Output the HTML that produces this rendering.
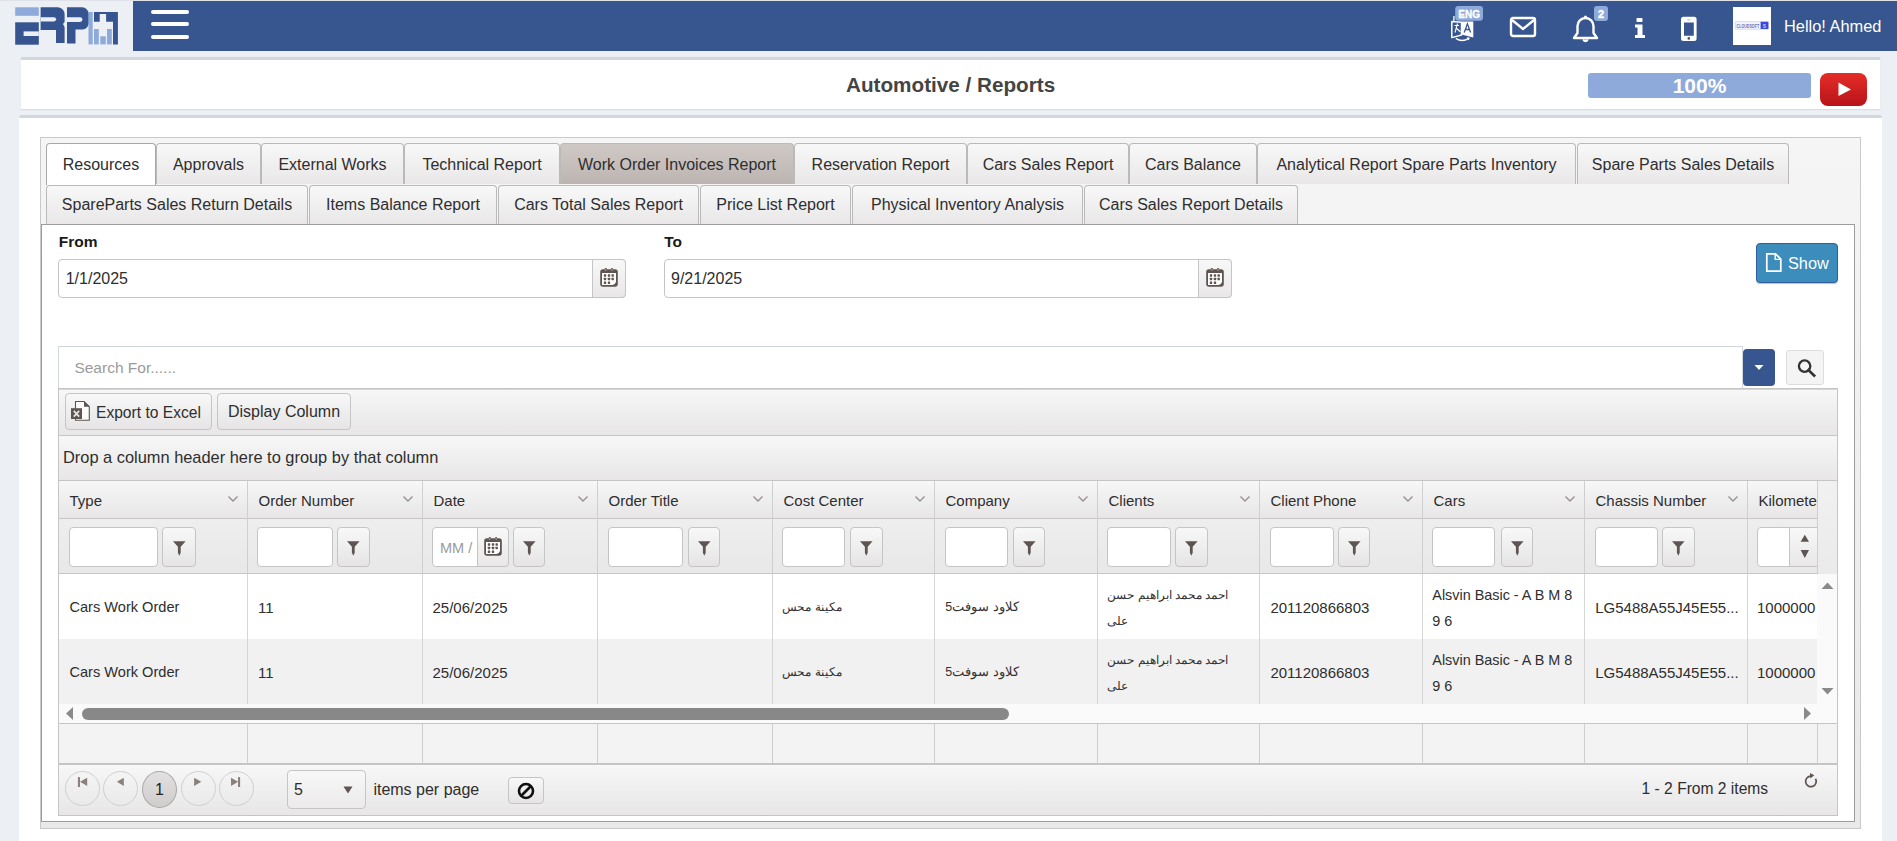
<!DOCTYPE html>
<html>
<head>
<meta charset="utf-8">
<style>
*{box-sizing:border-box;margin:0;padding:0}
html,body{width:1897px;height:841px;overflow:hidden}
body{position:relative;background:#ecf0f5;font-family:"Liberation Sans",sans-serif;color:#2e2e2e}
.a{position:absolute}
.t{position:absolute;white-space:nowrap;line-height:1}
#topline{left:0;top:0;width:1897px;height:1px;background:#dfe2e8}
#nav{left:133px;top:1px;width:1764px;height:50px;background:#37558f}
.bar{position:absolute;left:151px;width:38px;height:4px;border-radius:2px;background:#fff}
#titlecard{left:21px;top:57px;width:1859px;height:52px;background:#fff;border-top:3px solid #d2d6de;box-shadow:0 1px 1px rgba(0,0,0,.08)}
#maincard{left:19px;top:115px;width:1863px;height:760px;background:#fff;border-top:3px solid #d2d6de;border-radius:3px}
#tabwrap{left:40px;top:137px;width:1821px;height:692px;border:1px solid #c9c9c9;background:linear-gradient(#f5f5f5,#e9e9e9)}
#content{left:41px;top:224px;width:1814px;height:598px;border:1px solid #9c9c9c;background:#fff}
.tab{position:absolute;height:41px;border:1px solid #bababa;border-bottom:0;border-radius:4px 4px 0 0;background:linear-gradient(#f8f8f8,#e9e7e7);font-size:16px;color:#2e2e2e;text-align:center;line-height:41px;white-space:nowrap}
.tab.r2{height:39px;line-height:38px}
.tab.act{background:#fff;border-color:#a8a8a8;height:42px;line-height:41px}
.tab.hov{background:linear-gradient(#cfc9c6,#bcb4b0)}
.inp{position:absolute;border:1px solid #c5c5c5;border-radius:4px;background:#fff}
.addon{position:absolute;border:1px solid #c5c5c5;border-radius:0 4px 4px 0;background:linear-gradient(#f8f8f8,#e9e7e7)}
.btn{position:absolute;border:1px solid #c5c5c5;border-radius:4px;background:linear-gradient(#f8f8f8,#e6e4e4)}
.grad{background:linear-gradient(#f7f7f7,#e8e6e6)}
.vs{position:absolute;width:1px;background:#cfcfcf}
.hs{position:absolute;height:1px;background:#c5c5c5}
.circ{position:absolute;width:34px;height:34px;border:1px solid #d0d0d0;border-radius:50%;background:transparent}
</style>
</head>
<body>
<div id="topline" class="a"></div>
<div id="nav" class="a"></div>
<div class="bar" style="top:10px"></div>
<div class="bar" style="top:22px"></div>
<div class="bar" style="top:35px"></div>
<svg class="a" style="left:0;top:0" width="133" height="50" viewBox="0 0 133 50">
<g fill="#36548f">
<rect x="15.2" y="22.3" width="23.6" height="22.4"/>
<path d="M40.6 7.3 H58 A7 7 0 0 1 64.6 14.5 V22 L63 24 L64.6 27 V42.9 H56 V29.9 H40.6 Z"/>
<path d="M67 7.3 H82 A7 7 0 0 1 88.8 14.5 V23 A6.5 6.5 0 0 1 82.5 29.5 H75.5 V43.5 H67 Z"/>
<path d="M94 12 H117.9 V44.4 H113 V21.7 H106.1 V14.1 H99.7 V21.7 H94 Z"/>
</g>
<g fill="#ecf0f5">
<rect x="23.6" y="31.4" width="15.2" height="4.6"/>
<path d="M40.6 17.2 H54 A2.1 2.1 0 0 1 54 21.4 H40.6 Z"/>
<path d="M67 17.2 H80 A2.4 2.4 0 0 1 80 22 H67 Z"/>
</g>
<g fill="#8eaadb">
<rect x="15.2" y="7.3" width="23.6" height="8.5"/>
<rect x="88.5" y="12" width="4.2" height="32.4"/>
<rect x="94" y="29" width="4.8" height="15.4"/>
<rect x="100.3" y="36.3" width="5.5" height="8.1"/>
<rect x="107" y="29" width="4.8" height="15.4"/>
</g>
</svg>
<svg class="a" style="left:1445px;top:4px" width="45" height="42" viewBox="0 0 45 42">
<path d="M6.8 17.6 L16.5 18.2 V31 L6.8 33.6 Z" fill="none" stroke="#fff" stroke-width="1.5" stroke-linejoin="round"/>
<path d="M8.9 12 V17.6" stroke="#fff" stroke-width="1.3"/>
<path d="M16.5 17.6 H28.3 V33.6 L16.5 30.6 Z" fill="#fff"/>
<path d="M19.2 28.5 L22.4 19.8 L25.6 28.5 M20.4 25.5 H24.4" fill="none" stroke="#37558f" stroke-width="1.3"/>
<path d="M9.5 21.5 H14 M12.5 19.5 L10 28.5 M11.2 24 L15.5 28" fill="none" stroke="#fff" stroke-width="1.1"/>
<path d="M10.8 34.4 Q17 38.6 23.8 34.4" fill="none" stroke="#fff" stroke-width="1.3"/>
<path d="M22 33 L25 34 L23.5 36.5 Z" fill="#fff"/>
<rect x="10.2" y="2" width="27.8" height="14.8" rx="3" fill="#8eaadb"/>
<text x="24.1" y="13.6" text-anchor="middle" font-family="Liberation Sans" font-weight="700" font-size="10" fill="#fff" stroke="#fff" stroke-width="0.35">ENG</text>
</svg>
<svg class="a" style="left:1508px;top:15px" width="30" height="24" viewBox="0 0 30 24">
<rect x="3" y="3" width="24" height="18" rx="2" fill="none" stroke="#fff" stroke-width="2.4"/>
<path d="M4 5 L15 14 L26 5" fill="none" stroke="#fff" stroke-width="2.4"/>
</svg>
<svg class="a" style="left:1570px;top:4px" width="42" height="40" viewBox="0 0 42 40">
<path d="M15.5 14 A8 8 0 0 1 23.5 22 V29 L27 34 H4 L7.5 29 V22 A8 8 0 0 1 15.5 14 Z" fill="none" stroke="#fff" stroke-width="2.4" stroke-linejoin="round"/>
<circle cx="15.5" cy="13" r="1.6" fill="#fff"/>
<path d="M13 35.5 A2.6 2.6 0 0 0 18 35.5" fill="#fff" stroke="#fff" stroke-width="1.5"/>
<rect x="24" y="2" width="14" height="15" rx="3" fill="#8eaadb"/>
<text x="31" y="14" text-anchor="middle" font-family="Liberation Sans" font-weight="700" font-size="11" fill="#fff" stroke="#fff" stroke-width="0.4">2</text>
</svg>
<svg class="a" style="left:1632px;top:16px" width="16" height="24" viewBox="0 0 16 24">
<rect x="4.5" y="2" width="6" height="4" rx="0.8" fill="#fff"/>
<path d="M3 8.5 H10.5 V19 H13 V22 H3 V19 H5.5 V11.5 H3 Z" fill="#fff"/>
</svg>
<svg class="a" style="left:1679px;top:15px" width="20" height="28" viewBox="0 0 20 28">
<path fill-rule="evenodd" fill="#fff" d="M4.5 1.8 H15.1 A2.5 2.5 0 0 1 17.6 4.3 V23.5 A2.5 2.5 0 0 1 15.1 26 H4.5 A2.5 2.5 0 0 1 2 23.5 V4.3 A2.5 2.5 0 0 1 4.5 1.8 Z M5 7.6 V20.7 H14.8 V7.6 Z"/>
<circle cx="9.8" cy="23.4" r="1.3" fill="#37558f"/>
<rect x="8.3" y="4.6" width="3" height="0.7" fill="#8a9cc4"/>
</svg>
<div class="a" style="left:1733px;top:7px;width:38px;height:38px;background:#fff"></div>
<svg class="a" style="left:1734px;top:20px" width="36" height="12" viewBox="0 0 36 12">
<rect x="1.2" y="1.6" width="33" height="7.6" rx="1" fill="#f4f5fd" stroke="#c9cdf0" stroke-width="0.7"/>
<rect x="26.6" y="1.8" width="7.8" height="7.2" fill="#3a49d8"/>
<text x="2.6" y="7.6" font-family="Liberation Sans" font-weight="700" font-size="5" fill="#6a70b0" textLength="22.5" lengthAdjust="spacingAndGlyphs">CLOUDSOFT</text>
<text x="30.5" y="7.6" text-anchor="middle" font-family="Liberation Sans" font-weight="700" font-size="5" fill="#cfd3ff">S</text>
</svg>
<div class="t" style="left:1784.0px;top:18.1px;font-size:16.4px;color:#fff">Hello! Ahmed</div>
<div id="titlecard" class="a"></div>
<div class="t" style="left:846.0px;top:74.5px;font-size:20.7px;font-weight:700;color:#444">Automotive / Reports</div>
<div class="a" style="left:1588px;top:73px;width:223px;height:25px;background:#8eaadb;border-radius:3px"></div>
<div class="t" style="left:1588px;width:223px;text-align:center;top:75.2px;font-size:21px;font-weight:700;color:#fff">100%</div>
<div class="a" style="left:1820px;top:73px;width:47px;height:33px;border-radius:8px;background:linear-gradient(#e52d27,#b71319)"></div>
<svg class="a" style="left:1820px;top:73px" width="47" height="33" viewBox="0 0 47 33"><path d="M18.5 9.5 L31 16.5 L18.5 23 Z" fill="#fff"/></svg>
<div id="maincard" class="a"></div>
<div id="tabwrap" class="a"></div>
<div class="tab act" style="left:46px;top:143px;width:110px">Resources</div>
<div class="tab" style="left:156px;top:143px;width:105px">Approvals</div>
<div class="tab" style="left:261px;top:143px;width:143px">External Works</div>
<div class="tab" style="left:404px;top:143px;width:156px">Technical Report</div>
<div class="tab hov" style="left:560px;top:143px;width:234px">Work Order Invoices Report</div>
<div class="tab" style="left:794px;top:143px;width:173px">Reservation Report</div>
<div class="tab" style="left:967px;top:143px;width:162px">Cars Sales Report</div>
<div class="tab" style="left:1129px;top:143px;width:128px">Cars Balance</div>
<div class="tab" style="left:1257px;top:143px;width:319px">Analytical Report Spare Parts Inventory</div>
<div class="tab" style="left:1577px;top:143px;width:212px">Spare Parts Sales Details</div>
<div class="tab r2" style="left:46px;top:185px;width:262px">SpareParts Sales Return Details</div>
<div class="tab r2" style="left:309px;top:185px;width:188px">Items Balance Report</div>
<div class="tab r2" style="left:498px;top:185px;width:201px">Cars Total Sales Report</div>
<div class="tab r2" style="left:700px;top:185px;width:151px">Price List Report</div>
<div class="tab r2" style="left:852px;top:185px;width:231px">Physical Inventory Analysis</div>
<div class="tab r2" style="left:1084px;top:185px;width:214px">Cars Sales Report Details</div>
<div id="content" class="a"></div>
<svg width="0" height="0" style="position:absolute"><defs>
<g id="calico">
<rect x="0.2" y="1.2" width="17.6" height="17.6" rx="2.8" fill="#5e5452"/>
<path d="M2 5 H16 V13.6 Q15.6 16.6 12.4 17 H2 Z" fill="#fff"/>
<rect x="4.9" y="0" width="1.8" height="3.6" rx="0.6" fill="#5e5452"/><rect x="11.2" y="0" width="1.8" height="3.6" rx="0.6" fill="#5e5452"/>
<rect x="5.4" y="1.2" width="0.8" height="1.8" fill="#c9c3c1"/><rect x="11.7" y="1.2" width="0.8" height="1.8" fill="#c9c3c1"/>
<g fill="#5e5452">
<rect x="3.8" y="6.3" width="2.4" height="2.4" rx="0.4"/><rect x="7.8" y="6.3" width="2.4" height="2.4" rx="0.4"/><rect x="11.5" y="6.3" width="2.4" height="2.4" rx="0.4"/>
<rect x="3.8" y="9.8" width="2.4" height="2.4" rx="0.4"/><rect x="7.8" y="9.8" width="2.4" height="2.4" rx="0.4"/><rect x="11.5" y="9.8" width="2.4" height="2.4" rx="0.4"/>
<rect x="3.8" y="13.5" width="2.4" height="2.4" rx="0.4"/><rect x="7.8" y="13.5" width="2.4" height="2.4" rx="0.4"/>
</g>
</g>
<g id="funnel"><path d="M0 0.3 H12.6 L7.7 5.8 V11.8 L6.3 14.8 L4.9 11.8 V5.8 Z" fill="#5e5452"/></g>
</defs></svg>
<div class="t" style="left:58.7px;top:234.2px;font-size:15.5px;font-weight:700;color:#1a1a1a">From</div>
<div class="t" style="left:664.2px;top:234.2px;font-size:15.5px;font-weight:700;color:#1a1a1a">To</div>
<div class="inp" style="left:58px;top:259px;width:568px;height:39px"></div>
<div class="addon" style="left:592px;top:259px;width:34px;height:39px"></div>
<svg class="a" style="left:600px;top:268px" width="18" height="19" viewBox="0 0 18 19"><use href="#calico"/></svg>
<div class="inp" style="left:664px;top:259px;width:568px;height:39px"></div>
<div class="addon" style="left:1198px;top:259px;width:34px;height:39px"></div>
<svg class="a" style="left:1206px;top:268px" width="18" height="19" viewBox="0 0 18 19"><use href="#calico"/></svg>
<div class="t" style="left:65.7px;top:270.5px;font-size:16px;">1/1/2025</div>
<div class="t" style="left:671.0px;top:270.5px;font-size:16px;">9/21/2025</div>
<div class="a" style="left:1756px;top:243px;width:82px;height:40px;background:#3c8dbc;border:1px solid #2f5f9e;border-radius:4px;box-shadow:0 1px 1px rgba(0,0,0,.25)"></div>
<svg class="a" style="left:1765px;top:252px" width="18" height="21" viewBox="0 0 18 21">
<path d="M1.8 1.8 H10.5 L15.8 7.1 V19.2 H1.8 Z" fill="none" stroke="#fff" stroke-width="1.7" stroke-linejoin="miter"/>
<path d="M10.2 1.8 V7.4 H15.8" fill="none" stroke="#fff" stroke-width="1.4"/>
</svg>
<div class="t" style="left:1788.0px;top:254.5px;font-size:16.3px;color:#fff">Show</div>
<div class="a" style="left:58px;top:346px;width:1685px;height:43px;background:#fff;border:1px solid #d2d6de;border-bottom:0"></div>
<div class="t" style="left:74.4px;top:359.9px;font-size:15.5px;color:#9b9b9b">Search For......</div>
<div class="a" style="left:1743px;top:349px;width:32px;height:37px;background:#37558f;border-radius:4px"></div>
<svg class="a" style="left:1743px;top:349px" width="32" height="37" viewBox="0 0 32 37"><path d="M11.5 16 H20.5 L16 21 Z" fill="#fff"/></svg>
<div class="a" style="left:1786px;top:350px;width:38px;height:35px;background:#f4f4f4;border:1px solid #ddd;border-radius:3px"></div>
<svg class="a" style="left:1796px;top:358px" width="22" height="22" viewBox="0 0 22 22">
<circle cx="8.6" cy="8.1" r="5.7" fill="none" stroke="#333" stroke-width="2.3"/>
<path d="M12.6 12.2 L18.2 17.6" stroke="#333" stroke-width="2.6" stroke-linecap="square"/>
</svg>
<div class="a" style="left:58px;top:388px;width:1780px;height:428px;border:1px solid #c5c5c5;background:#fff"></div>
<div class="a grad" style="left:59px;top:389px;width:1778px;height:47px;border-top:1px solid #d2d6de;border-bottom:1px solid #c5c5c5"></div>
<div class="btn" style="left:65px;top:393px;width:147px;height:37px;"></div>
<div class="btn" style="left:217px;top:393px;width:134px;height:37px;"></div>
<svg class="a" style="left:70px;top:400px" width="22" height="23" viewBox="0 0 22 23">
<path d="M5.5 1.5 H14 L19.3 6.8 V20.2 H5.5 Z" fill="#fbfbfb" stroke="#5e5452" stroke-width="1.1"/>
<path d="M14 1 L19.8 6.8 H14 Z" fill="#5e5452"/>
<rect x="1" y="8.2" width="11" height="10.8" fill="#5e5452"/>
<path d="M3.8 10.8 L9.2 16.6 M9.2 10.8 L3.8 16.6" stroke="#e8e6e6" stroke-width="1.7"/>
</svg>
<div class="t" style="left:96.0px;top:404.8px;font-size:15.6px;">Export to Excel</div>
<div class="t" style="left:228.0px;top:404.2px;font-size:16px;">Display Column</div>
<div class="a grad" style="left:59px;top:436px;width:1778px;height:45px;border-bottom:1px solid #c5c5c5"></div>
<div class="t" style="left:63.0px;top:449.4px;font-size:16.4px;">Drop a column header here to group by that column</div>
<div class="a grad" style="left:59px;top:481px;width:1778px;height:38px;border-bottom:1px solid #c5c5c5"></div>
<div class="a" style="left:59px;top:519px;width:1778px;height:55px;background:linear-gradient(#efeeee,#e9e8e8);border-bottom:1px solid #c5c5c5"></div>
<div class="t" style="left:69.5px;top:493.3px;font-size:15px;">Type</div>
<svg class="a" style="left:227px;top:494px" width="12" height="10" viewBox="0 0 12 10"><path d="M1.5 2.5 L6 7 L10.5 2.5" fill="none" stroke="#9a9090" stroke-width="1.4"/></svg>
<div class="vs" style="left:247px;top:481px;height:92px"></div>
<div class="t" style="left:258.5px;top:493.3px;font-size:15px;">Order Number</div>
<svg class="a" style="left:402px;top:494px" width="12" height="10" viewBox="0 0 12 10"><path d="M1.5 2.5 L6 7 L10.5 2.5" fill="none" stroke="#9a9090" stroke-width="1.4"/></svg>
<div class="vs" style="left:422px;top:481px;height:92px"></div>
<div class="t" style="left:433.5px;top:493.3px;font-size:15px;">Date</div>
<svg class="a" style="left:577px;top:494px" width="12" height="10" viewBox="0 0 12 10"><path d="M1.5 2.5 L6 7 L10.5 2.5" fill="none" stroke="#9a9090" stroke-width="1.4"/></svg>
<div class="vs" style="left:597px;top:481px;height:92px"></div>
<div class="t" style="left:608.5px;top:493.3px;font-size:15px;">Order Title</div>
<svg class="a" style="left:752px;top:494px" width="12" height="10" viewBox="0 0 12 10"><path d="M1.5 2.5 L6 7 L10.5 2.5" fill="none" stroke="#9a9090" stroke-width="1.4"/></svg>
<div class="vs" style="left:772px;top:481px;height:92px"></div>
<div class="t" style="left:783.5px;top:493.3px;font-size:15px;">Cost Center</div>
<svg class="a" style="left:914px;top:494px" width="12" height="10" viewBox="0 0 12 10"><path d="M1.5 2.5 L6 7 L10.5 2.5" fill="none" stroke="#9a9090" stroke-width="1.4"/></svg>
<div class="vs" style="left:934px;top:481px;height:92px"></div>
<div class="t" style="left:945.5px;top:493.3px;font-size:15px;">Company</div>
<svg class="a" style="left:1077px;top:494px" width="12" height="10" viewBox="0 0 12 10"><path d="M1.5 2.5 L6 7 L10.5 2.5" fill="none" stroke="#9a9090" stroke-width="1.4"/></svg>
<div class="vs" style="left:1097px;top:481px;height:92px"></div>
<div class="t" style="left:1108.5px;top:493.3px;font-size:15px;">Clients</div>
<svg class="a" style="left:1239px;top:494px" width="12" height="10" viewBox="0 0 12 10"><path d="M1.5 2.5 L6 7 L10.5 2.5" fill="none" stroke="#9a9090" stroke-width="1.4"/></svg>
<div class="vs" style="left:1259px;top:481px;height:92px"></div>
<div class="t" style="left:1270.5px;top:493.3px;font-size:15px;">Client Phone</div>
<svg class="a" style="left:1402px;top:494px" width="12" height="10" viewBox="0 0 12 10"><path d="M1.5 2.5 L6 7 L10.5 2.5" fill="none" stroke="#9a9090" stroke-width="1.4"/></svg>
<div class="vs" style="left:1422px;top:481px;height:92px"></div>
<div class="t" style="left:1433.5px;top:493.3px;font-size:15px;">Cars</div>
<svg class="a" style="left:1564px;top:494px" width="12" height="10" viewBox="0 0 12 10"><path d="M1.5 2.5 L6 7 L10.5 2.5" fill="none" stroke="#9a9090" stroke-width="1.4"/></svg>
<div class="vs" style="left:1584px;top:481px;height:92px"></div>
<div class="t" style="left:1595.5px;top:493.3px;font-size:15px;">Chassis Number</div>
<svg class="a" style="left:1727px;top:494px" width="12" height="10" viewBox="0 0 12 10"><path d="M1.5 2.5 L6 7 L10.5 2.5" fill="none" stroke="#9a9090" stroke-width="1.4"/></svg>
<div class="vs" style="left:1747px;top:481px;height:92px"></div>
<div class="a" style="left:1758.5px;top:493.3px;width:58.5px;overflow:hidden;white-space:nowrap;line-height:1;font-size:15px">Kilometer</div>
<div class="vs" style="left:1817px;top:481px;height:92px"></div>
<div class="inp" style="left:69px;top:527px;width:89px;height:40px"></div>
<div class="btn" style="left:162px;top:527px;width:34px;height:40px"></div>
<svg class="a" style="left:172.7px;top:540.5px" width="13" height="15" viewBox="0 0 13 15"><use href="#funnel"/></svg>
<div class="inp" style="left:257px;top:527px;width:76px;height:40px"></div>
<div class="btn" style="left:337px;top:527px;width:33px;height:40px"></div>
<svg class="a" style="left:347.2px;top:540.5px" width="13" height="15" viewBox="0 0 13 15"><use href="#funnel"/></svg>
<div class="inp" style="left:432px;top:527px;width:76px;height:40px"></div>
<div class="btn" style="left:513px;top:527px;width:32px;height:40px"></div>
<svg class="a" style="left:522.7px;top:540.5px" width="13" height="15" viewBox="0 0 13 15"><use href="#funnel"/></svg>
<div class="a" style="left:433px;top:528px;width:44px;height:38px;overflow:hidden"><div class="t" style="left:7px;top:12.7px;font-size:14.5px;color:#9a9a9a">MM / DD</div></div>
<div class="addon" style="left:477px;top:527px;width:32px;height:40px;background:linear-gradient(#f8f8f8,#e9e7e7)"></div>
<svg class="a" style="left:484px;top:537px" width="18" height="19" viewBox="0 0 18 19"><use href="#calico"/></svg>
<div class="inp" style="left:608px;top:527px;width:75px;height:40px"></div>
<div class="btn" style="left:688px;top:527px;width:32px;height:40px"></div>
<svg class="a" style="left:697.7px;top:540.5px" width="13" height="15" viewBox="0 0 13 15"><use href="#funnel"/></svg>
<div class="inp" style="left:782px;top:527px;width:63px;height:40px"></div>
<div class="btn" style="left:850px;top:527px;width:33px;height:40px"></div>
<svg class="a" style="left:860.2px;top:540.5px" width="13" height="15" viewBox="0 0 13 15"><use href="#funnel"/></svg>
<div class="inp" style="left:945px;top:527px;width:63px;height:40px"></div>
<div class="btn" style="left:1013px;top:527px;width:32px;height:40px"></div>
<svg class="a" style="left:1022.7px;top:540.5px" width="13" height="15" viewBox="0 0 13 15"><use href="#funnel"/></svg>
<div class="inp" style="left:1107px;top:527px;width:64px;height:40px"></div>
<div class="btn" style="left:1175px;top:527px;width:33px;height:40px"></div>
<svg class="a" style="left:1185.2px;top:540.5px" width="13" height="15" viewBox="0 0 13 15"><use href="#funnel"/></svg>
<div class="inp" style="left:1270px;top:527px;width:64px;height:40px"></div>
<div class="btn" style="left:1338px;top:527px;width:32px;height:40px"></div>
<svg class="a" style="left:1347.7px;top:540.5px" width="13" height="15" viewBox="0 0 13 15"><use href="#funnel"/></svg>
<div class="inp" style="left:1432px;top:527px;width:63px;height:40px"></div>
<div class="btn" style="left:1501px;top:527px;width:32px;height:40px"></div>
<svg class="a" style="left:1510.7px;top:540.5px" width="13" height="15" viewBox="0 0 13 15"><use href="#funnel"/></svg>
<div class="inp" style="left:1595px;top:527px;width:63px;height:40px"></div>
<div class="btn" style="left:1662px;top:527px;width:33px;height:40px"></div>
<svg class="a" style="left:1672.2px;top:540.5px" width="13" height="15" viewBox="0 0 13 15"><use href="#funnel"/></svg>
<div class="a" style="left:1757px;top:527px;width:60px;height:40px;overflow:hidden"><div class="inp" style="left:0;top:0;width:80px;height:40px"></div><div class="a" style="left:32px;top:1px;width:30px;height:38px;border-left:1px solid #c5c5c5;background:linear-gradient(#f8f8f8,#e9e7e7)"></div><svg class="a" style="left:40px;top:6px" width="16" height="28" viewBox="0 0 16 28"><path d="M3.6 8.8 H12 L7.8 1.7 Z M3.6 17 H12 L7.8 25 Z" fill="#5e5452"/></svg></div>
<div class="a" style="left:1818px;top:481px;width:19px;height:93px;background:linear-gradient(#f1f1f1,#ebeaea)"></div>
<div class="a" style="left:59px;top:574px;width:1758px;height:65px;background:#fff"></div>
<div class="a" style="left:59px;top:639px;width:1758px;height:65px;background:#f1f1f1"></div>
<div class="vs" style="left:247px;top:574px;height:130px;background:#d6d6d6"></div>
<div class="vs" style="left:422px;top:574px;height:130px;background:#d6d6d6"></div>
<div class="vs" style="left:597px;top:574px;height:130px;background:#d6d6d6"></div>
<div class="vs" style="left:772px;top:574px;height:130px;background:#d6d6d6"></div>
<div class="vs" style="left:934px;top:574px;height:130px;background:#d6d6d6"></div>
<div class="vs" style="left:1097px;top:574px;height:130px;background:#d6d6d6"></div>
<div class="vs" style="left:1259px;top:574px;height:130px;background:#d6d6d6"></div>
<div class="vs" style="left:1422px;top:574px;height:130px;background:#d6d6d6"></div>
<div class="vs" style="left:1584px;top:574px;height:130px;background:#d6d6d6"></div>
<div class="vs" style="left:1747px;top:574px;height:130px;background:#d6d6d6"></div>
<div class="t" style="left:69.4px;top:600.0px;font-size:14.6px;">Cars Work Order</div>
<div class="t" style="left:258.0px;top:599.7px;font-size:15px;">11</div>
<div class="t" style="left:432.5px;top:599.7px;font-size:15px;">25/06/2025</div>
<div class="t" style="left:782.4px;top:601.2px;font-size:12px;color:#333">مكينة محس</div>
<div class="t" style="left:945.3px;top:600.8px;font-size:12.5px;color:#333">كلاود سوفت5</div>
<div class="t" style="left:1107.4px;top:589.2px;font-size:12px;color:#333">احمد محمد ابراهيم حسن</div>
<div class="t" style="left:1107.4px;top:615.0px;font-size:12px;color:#333">على</div>
<div class="t" style="left:1270.4px;top:599.7px;font-size:15px;">201120866803</div>
<div class="t" style="left:1432.3px;top:588.4px;font-size:14.4px;">Alsvin Basic - A B M 8</div>
<div class="t" style="left:1432.3px;top:614.2px;font-size:14.4px;">9 6</div>
<div class="t" style="left:1595.2px;top:599.7px;font-size:15px;">LG5488A55J45E55...</div>
<div class="a" style="left:1757px;top:599.7px;width:60px;overflow:hidden;white-space:nowrap;line-height:1;font-size:15px">1000000</div>
<div class="t" style="left:69.4px;top:665.0px;font-size:14.6px;">Cars Work Order</div>
<div class="t" style="left:258.0px;top:664.7px;font-size:15px;">11</div>
<div class="t" style="left:432.5px;top:664.7px;font-size:15px;">25/06/2025</div>
<div class="t" style="left:782.4px;top:666.2px;font-size:12px;color:#333">مكينة محس</div>
<div class="t" style="left:945.3px;top:665.8px;font-size:12.5px;color:#333">كلاود سوفت5</div>
<div class="t" style="left:1107.4px;top:654.2px;font-size:12px;color:#333">احمد محمد ابراهيم حسن</div>
<div class="t" style="left:1107.4px;top:680.0px;font-size:12px;color:#333">على</div>
<div class="t" style="left:1270.4px;top:664.7px;font-size:15px;">201120866803</div>
<div class="t" style="left:1432.3px;top:653.4px;font-size:14.4px;">Alsvin Basic - A B M 8</div>
<div class="t" style="left:1432.3px;top:679.2px;font-size:14.4px;">9 6</div>
<div class="t" style="left:1595.2px;top:664.7px;font-size:15px;">LG5488A55J45E55...</div>
<div class="a" style="left:1757px;top:664.7px;width:60px;overflow:hidden;white-space:nowrap;line-height:1;font-size:15px">1000000</div>
<div class="a" style="left:1817px;top:574px;width:20px;height:130px;background:#fafafa"></div>
<svg class="a" style="left:1818px;top:578px" width="19" height="124" viewBox="0 0 19 124"><path d="M3.5 11 H15.5 L9.5 4.5 Z M3.5 110 H15.5 L9.5 116.5 Z" fill="#8a8a8a"/></svg>
<div class="a" style="left:59px;top:704px;width:1778px;height:19px;background:#fafafa"></div>
<div class="a" style="left:82px;top:708px;width:927px;height:12px;background:#888;border-radius:6px"></div>
<svg class="a" style="left:60px;top:704px" width="20" height="20" viewBox="0 0 20 20"><path d="M13 3 V16 L6 9.5 Z" fill="#8a8a8a"/></svg>
<svg class="a" style="left:1798px;top:704px" width="20" height="20" viewBox="0 0 20 20"><path d="M6 3 V16 L13 9.5 Z" fill="#8a8a8a"/></svg>
<div class="a" style="left:59px;top:723px;width:1778px;height:41px;background:#f3f3f3;border-top:1px solid #c5c5c5"></div>
<div class="vs" style="left:247px;top:724px;height:40px;background:#cfcfcf"></div>
<div class="vs" style="left:422px;top:724px;height:40px;background:#cfcfcf"></div>
<div class="vs" style="left:597px;top:724px;height:40px;background:#cfcfcf"></div>
<div class="vs" style="left:772px;top:724px;height:40px;background:#cfcfcf"></div>
<div class="vs" style="left:934px;top:724px;height:40px;background:#cfcfcf"></div>
<div class="vs" style="left:1097px;top:724px;height:40px;background:#cfcfcf"></div>
<div class="vs" style="left:1259px;top:724px;height:40px;background:#cfcfcf"></div>
<div class="vs" style="left:1422px;top:724px;height:40px;background:#cfcfcf"></div>
<div class="vs" style="left:1584px;top:724px;height:40px;background:#cfcfcf"></div>
<div class="vs" style="left:1747px;top:724px;height:40px;background:#cfcfcf"></div>
<div class="vs" style="left:1817px;top:724px;height:40px;background:#cfcfcf"></div>
<div class="a grad" style="left:59px;top:763px;width:1778px;height:52px;border-top:2px solid #c5c5c5"></div>
<div class="circ" style="left:65px;top:771px;width:35px;height:35px"></div>
<div class="circ" style="left:103px;top:771px;width:35px;height:35px"></div>
<div class="circ" style="left:142px;top:771px;width:35px;height:37px;border-color:#a8a8a8;background:linear-gradient(#e2e0e0,#cfcccc)"></div>
<div class="circ" style="left:181px;top:771px;width:35px;height:35px"></div>
<div class="circ" style="left:219px;top:771px;width:35px;height:35px"></div>
<div class="t" style="left:142px;width:35px;text-align:center;top:781.5px;font-size:16px;color:#222">1</div>
<svg class="a" style="left:60px;top:770px" width="200" height="24" viewBox="0 0 200 24">
<g fill="#8a807e">
<rect x="17.9" y="7.1" width="2.1" height="9.9"/><path d="M27.2 7.7 V16 L20 11.85 Z"/>
<path d="M63.8 7.7 V16 L56.9 11.85 Z"/>
<path d="M134.1 7.7 V16 L141.3 11.85 Z"/>
<path d="M171 7.7 V16 L178.2 11.85 Z"/><rect x="178" y="7.1" width="2.1" height="9.9"/>
</g></svg>
<div class="a" style="left:287px;top:770px;width:79px;height:39px;border:1px solid #c5c5c5;border-radius:4px;background:linear-gradient(#f8f8f8,#eceaea)"></div>
<div class="t" style="left:294.0px;top:781.5px;font-size:16px;">5</div>
<svg class="a" style="left:342px;top:784px" width="12" height="12" viewBox="0 0 12 12"><path d="M1.5 2.5 H10.5 L6 9.5 Z" fill="#5e5452"/></svg>
<div class="t" style="left:373.4px;top:781.5px;font-size:16px;">items per page</div>
<div class="btn" style="left:508px;top:777px;width:36px;height:27px;"></div>
<svg class="a" style="left:516px;top:781px" width="20" height="20" viewBox="0 0 20 20"><circle cx="10" cy="10" r="7" fill="none" stroke="#111" stroke-width="2.6"/><path d="M5 15 L15 5" stroke="#111" stroke-width="2.6"/></svg>
<div class="t" style="left:1641.6px;top:780.6px;font-size:15.6px;">1 - 2 From 2 items</div>
<svg class="a" style="left:1802px;top:771px" width="18" height="18" viewBox="0 0 18 18"><path d="M13.5 7.75 A5.3 5.3 0 1 1 8.9 5.1" fill="none" stroke="#5e5452" stroke-width="1.7"/><path d="M8 2 L12.3 4.3 L8.4 7.4 Z" fill="#5e5452"/></svg>

</body>
</html>
